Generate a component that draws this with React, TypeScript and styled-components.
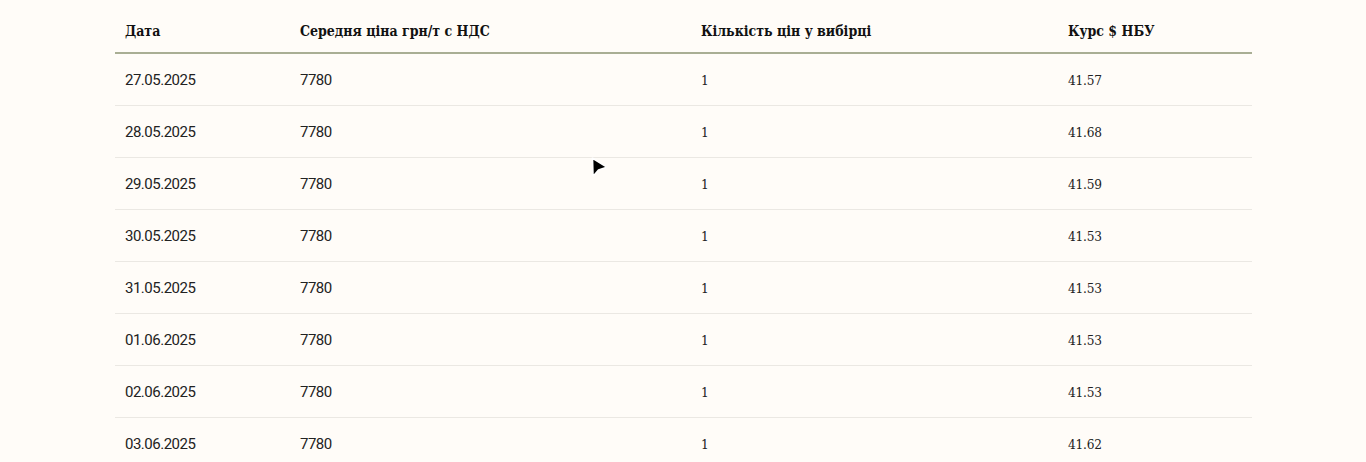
import React from "react";
import styled, { createGlobalStyle } from "styled-components";

const Global = createGlobalStyle`
  html, body { margin: 0; padding: 0; background: #fffcf8; }
  body { font-family: "DejaVu Serif", serif; color: #1a1a1a; }
`;

const Page = styled.div`
  position: relative;
  padding: 10px 114px 0 115px;
  height: 462px;
  overflow: hidden;
  box-sizing: border-box;
`;

const Table = styled.table`
  width: 100%;
  border-collapse: collapse;
`;

const Th = styled.th<{ $w: number }>`
  width: ${(p) => p.$w}px;
  text-align: left;
  font-family: "DejaVu Serif Condensed", "DejaVu Serif", serif;
  font-stretch: condensed;
  font-weight: bold;
  font-size: 14px;
  color: #111;
  height: 43px;
  padding: 0 10px;
  border-bottom: 2px solid #a9ae94;
  box-sizing: border-box;
`;

const Td = styled.td<{ $sans?: boolean }>`
  font-family: ${(p) =>
    p.$sans ? `Roboto, "Liberation Sans", sans-serif` : `"DejaVu Serif Condensed", "DejaVu Serif", serif`};
  font-stretch: ${(p) => (p.$sans ? "normal" : "condensed")};
  font-size: ${(p) => (p.$sans ? "15px" : "13.5px")};
  letter-spacing: ${(p) => (p.$sans ? "-0.5px" : "-0.2px")};
  color: #222;
  height: 50px;
  padding: 1px 10px 0;
  border-bottom: 1px solid #ebe8e3;
`;

const Cursor = styled.svg`
  position: absolute;
  left: 589px;
  top: 156px;
`;

const rows = [
  ["27.05.2025", "7780", "1", "41.57"],
  ["28.05.2025", "7780", "1", "41.68"],
  ["29.05.2025", "7780", "1", "41.59"],
  ["30.05.2025", "7780", "1", "41.53"],
  ["31.05.2025", "7780", "1", "41.53"],
  ["01.06.2025", "7780", "1", "41.53"],
  ["02.06.2025", "7780", "1", "41.53"],
  ["03.06.2025", "7780", "1", "41.62"],
];

export default function App() {
  return (
    <>
      <Global />
      <Page>
        <Table>
          <thead>
            <tr>
              <Th $w={175}>Дата</Th>
              <Th $w={401}>Середня ціна грн/т с НДС</Th>
              <Th $w={367}>Кількість цін у вибірці</Th>
              <Th $w={194}>Курс $ НБУ</Th>
            </tr>
          </thead>
          <tbody>
            {rows.map((r) => (
              <tr key={r[0]}>
                <Td $sans>{r[0]}</Td>
                <Td $sans>{r[1]}</Td>
                <Td>{r[2]}</Td>
                <Td>{r[3]}</Td>
              </tr>
            ))}
          </tbody>
        </Table>
        <Cursor width="22" height="24" viewBox="0 0 22 24">
          <path
            d="M3.5 2.5 Q3 2 3.6 2.3 L17 10.6 Q17.6 11 17 11.4 L9.5 14 L4.6 19.8 Q4 20.4 4 19.6 Z"
            fill="#000"
            stroke="#fff"
            strokeWidth="1.6"
            strokeLinejoin="round"
          />
        </Cursor>
      </Page>
    </>
  );
}
